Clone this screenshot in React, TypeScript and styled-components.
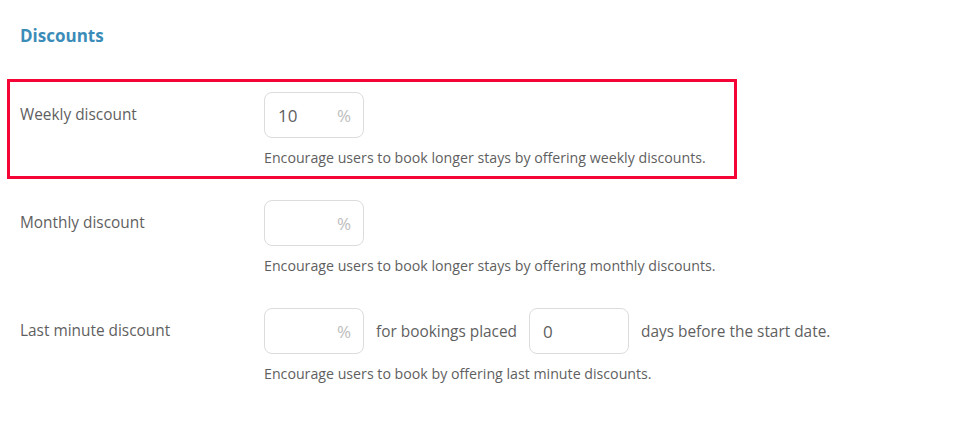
import React from 'react';
import styled, { createGlobalStyle } from 'styled-components';

const GlobalStyle = createGlobalStyle`
  body {
    margin: 0;
    background: #fff;
    font-family: "Open Sans", "Liberation Sans", sans-serif;
  }
`;

const Page = styled.div`
  padding: 24px 0 0 7px;
`;

const Heading = styled.h2`
  margin: 0 0 31px 13px;
  font-size: 17px;
  line-height: 24px;
  font-weight: 700;
  color: #3b8cb8;
`;

const Row = styled.div<{ $highlighted?: boolean }>`
  display: grid;
  grid-template-columns: 244px auto;
  width: 714px;
  padding: 10px 0 9px 10px;
  border: 3px solid ${({ $highlighted }) => ($highlighted ? '#f50536' : 'transparent')};
  margin-bottom: 8px;
`;

const Label = styled.div`
  font-size: 15.4px;
  line-height: 46px;
  color: #5f5f5f;
  white-space: nowrap;
`;

const Field = styled.div`
  display: flex;
  flex-direction: column;
  gap: 10px;
`;

const Controls = styled.div`
  display: flex;
  align-items: center;
  gap: 12px;
  font-size: 15.4px;
  color: #5f5f5f;
  white-space: nowrap;
`;

const InputBox = styled.div`
  box-sizing: border-box;
  flex: none;
  width: 100px;
  height: 46px;
  display: flex;
  align-items: center;
  justify-content: space-between;
  padding: 0 12px 0 13px;
  border: 1px solid #dcdcdc;
  border-radius: 8px;
  font-size: 17px;
  color: #5f5f5f;
`;

const Unit = styled.span`
  font-size: 17px;
  color: #bdbdbd;
`;

const Help = styled.div`
  font-size: 14.2px;
  line-height: 19px;
  color: #5f5f5f;
  white-space: nowrap;
`;

const Amount: React.FC<{ value?: string; unit?: string }> = ({ value, unit }) => (
  <InputBox>
    <span>{value}</span>
    {unit && <Unit>{unit}</Unit>}
  </InputBox>
);

const App: React.FC = () => (
  <Page>
    <GlobalStyle />
    <Heading>Discounts</Heading>

    <Row $highlighted>
      <Label>Weekly discount</Label>
      <Field>
        <Controls>
          <Amount value="10" unit="%" />
        </Controls>
        <Help>Encourage users to book longer stays by offering weekly discounts.</Help>
      </Field>
    </Row>

    <Row>
      <Label>Monthly discount</Label>
      <Field>
        <Controls>
          <Amount unit="%" />
        </Controls>
        <Help>Encourage users to book longer stays by offering monthly discounts.</Help>
      </Field>
    </Row>

    <Row>
      <Label>Last minute discount</Label>
      <Field>
        <Controls>
          <Amount unit="%" />
          <span>for bookings placed</span>
          <Amount value="0" />
          <span>days before the start date.</span>
        </Controls>
        <Help>Encourage users to book by offering last minute discounts.</Help>
      </Field>
    </Row>
  </Page>
);

export default App;
